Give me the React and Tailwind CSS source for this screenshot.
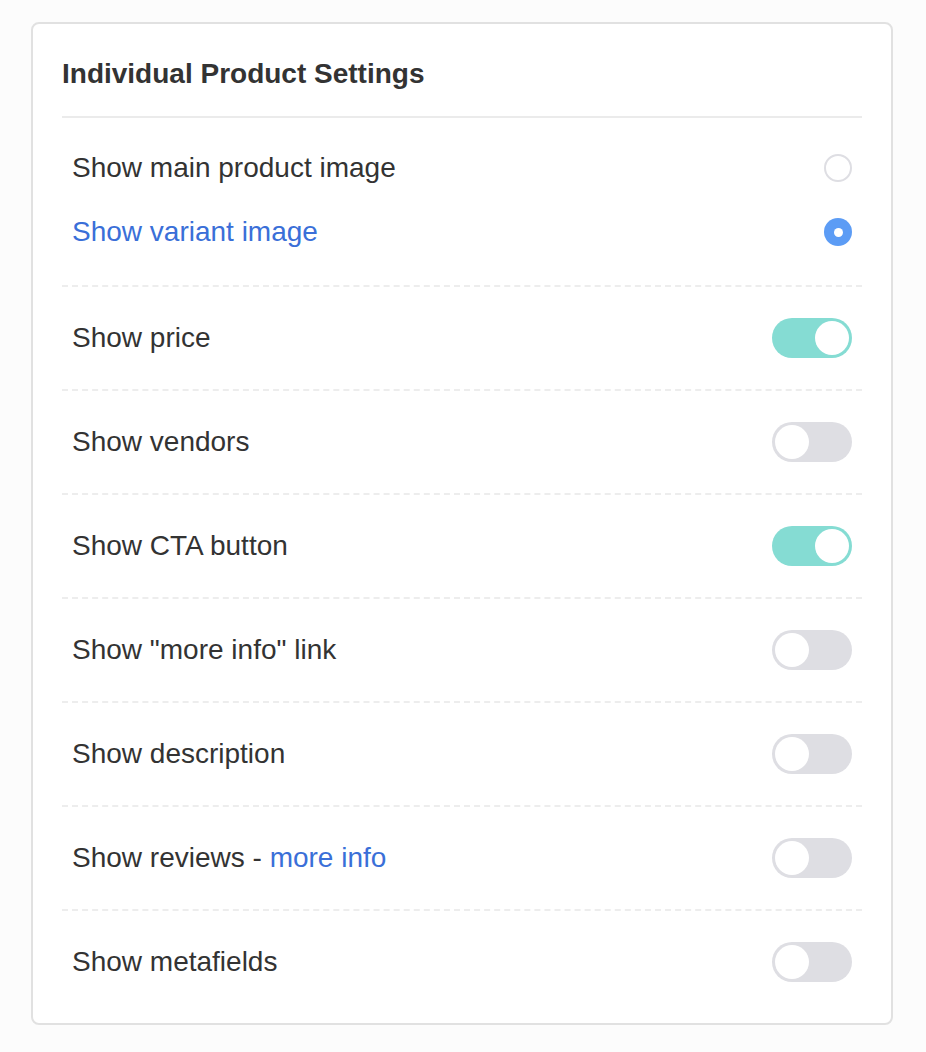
import { useState } from 'react'

const toggles = [
  { key: 'price', label: 'Show price', on: true },
  { key: 'vendors', label: 'Show vendors', on: false },
  { key: 'cta', label: 'Show CTA button', on: true },
  { key: 'moreinfo', label: 'Show "more info" link', on: false },
  { key: 'description', label: 'Show description', on: false },
  { key: 'reviews', label: 'Show reviews - ', link: 'more info', on: false },
  { key: 'metafields', label: 'Show metafields', on: false },
]

function Radio({ checked, onClick }) {
  return (
    <button
      onClick={onClick}
      className={`w-7 h-7 rounded-full flex items-center justify-center ${
        checked ? 'bg-[#5c9cf5]' : 'border-2 border-[#dedee3] bg-white'
      }`}
    >
      {checked && <span className="w-[9px] h-[9px] rounded-full bg-white" />}
    </button>
  )
}

function Toggle({ on, onClick }) {
  return (
    <button
      onClick={onClick}
      className={`w-20 h-10 rounded-full p-[3px] flex ${
        on ? 'bg-[#85dcd3] justify-end' : 'bg-[#dedee3] justify-start'
      }`}
    >
      <span className="w-[34px] h-[34px] rounded-full bg-white" />
    </button>
  )
}

export default function App() {
  const [image, setImage] = useState('variant')
  const [state, setState] = useState(
    Object.fromEntries(toggles.map((t) => [t.key, t.on]))
  )

  return (
    <div className="min-h-screen bg-[#fcfcfc] px-[31px] pt-[22px] font-['Liberation_Sans',Arial,sans-serif] text-[#333333]">
      <div className="w-[862px] bg-white border-2 border-[#e1e1e1] rounded-[8px] px-[29px] pb-[10px]">
        <div className="pt-[33px] pb-[25px] border-b-2 border-[#ebebeb]">
          <h2 className="text-[28px] leading-[34px] font-bold text-[#333333]">
            Individual Product Settings
          </h2>
        </div>

        <div className="pt-[18px] pb-[21px]">
          <div className="h-16 px-[10px] flex items-center justify-between">
            <span className={`text-[28px] ${image === 'main' ? 'text-[#3a6fd8]' : ''}`}>
              Show main product image
            </span>
            <Radio checked={image === 'main'} onClick={() => setImage('main')} />
          </div>
          <div className="h-16 px-[10px] flex items-center justify-between">
            <span className={`text-[28px] ${image === 'variant' ? 'text-[#3a6fd8]' : ''}`}>
              Show variant image
            </span>
            <Radio checked={image === 'variant'} onClick={() => setImage('variant')} />
          </div>
        </div>

        {toggles.map((t) => (
          <div
            key={t.key}
            className="h-[104px] px-[10px] flex items-center justify-between border-t-2 border-dashed border-[#ededed]"
          >
            <span className="text-[28px]">
              {t.label}
              {t.link && <a href="#" className="text-[#3a6fd8]">{t.link}</a>}
            </span>
            <Toggle
              on={state[t.key]}
              onClick={() => setState({ ...state, [t.key]: !state[t.key] })}
            />
          </div>
        ))}
      </div>
    </div>
  )
}
